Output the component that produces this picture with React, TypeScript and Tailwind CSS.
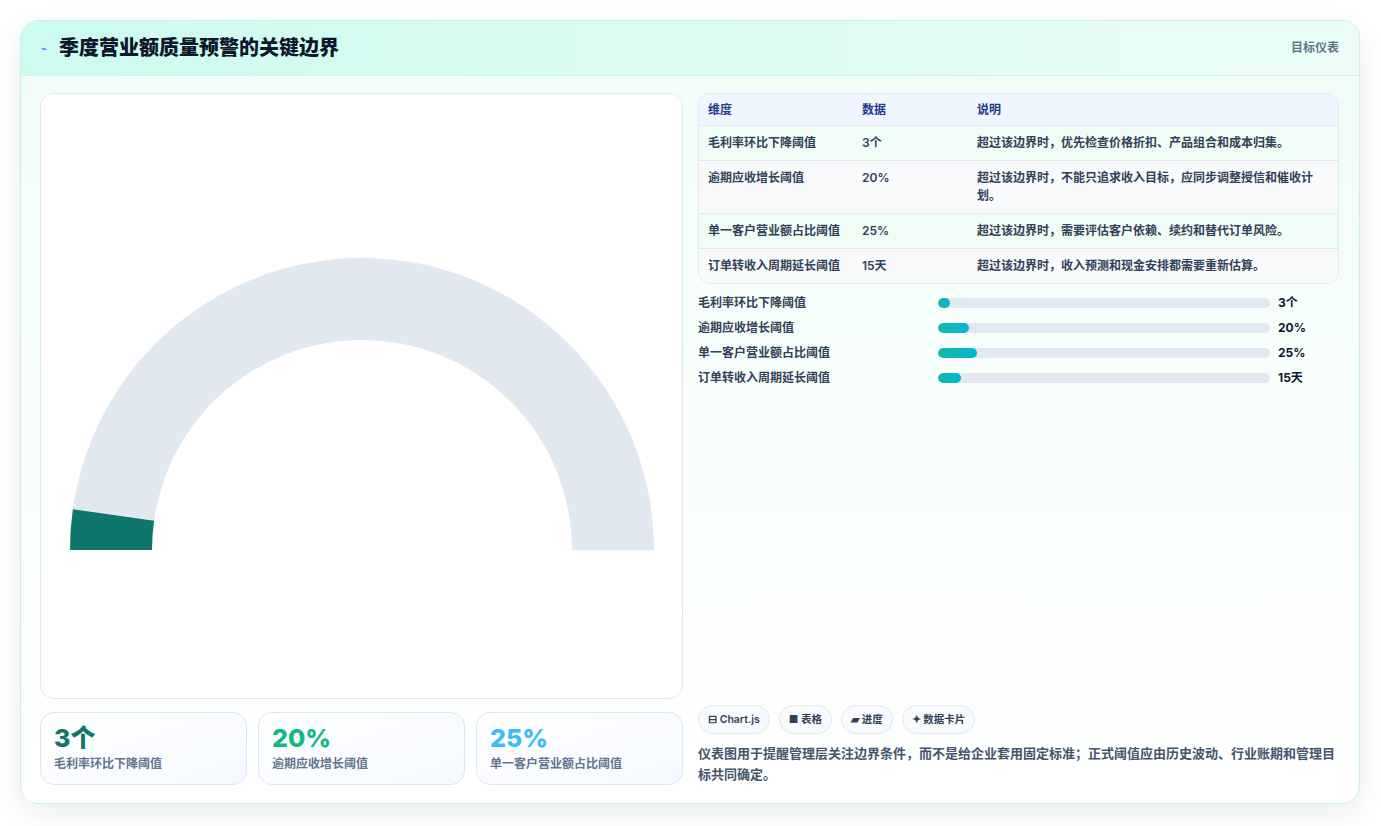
import React from "react";

const rows = [
  ["毛利率环比下降阈值", "3个", "超过该边界时，优先检查价格折扣、产品组合和成本归集。"],
  ["逾期应收增长阈值", "20%", "超过该边界时，不能只追求收入目标，应同步调整授信和催收计划。"],
  ["单一客户营业额占比阈值", "25%", "超过该边界时，需要评估客户依赖、续约和替代订单风险。"],
  ["订单转收入周期延长阈值", "15天", "超过该边界时，收入预测和现金安排都需要重新估算。"],
];
const bars = [12, 31, 39, 23];

function Gauge() {
  const cx = 321, cy = 456, R = 292, r = 210;
  const a = (180 - 8) * Math.PI / 180;
  const p = (rad: number, ang: number) => `${cx + rad * Math.cos(ang)} ${cy - rad * Math.sin(ang)}`;
  return (
    <svg width="643" height="606" viewBox="0 0 643 606" className="block">
      <path d={`M ${p(R, Math.PI)} A ${R} ${R} 0 0 1 ${p(R, 0)} L ${p(r, 0)} A ${r} ${r} 0 0 0 ${p(r, Math.PI)} Z`} fill="#e2e8f0" />
      <path d={`M ${p(R, Math.PI)} A ${R} ${R} 0 0 1 ${p(R, a)} L ${p(r, a)} A ${r} ${r} 0 0 0 ${p(r, Math.PI)} Z`} fill="#0f766e" />
    </svg>
  );
}

export default function App() {
  return (
    <div className="min-h-[826px] bg-white p-5 text-slate-800" style={{ fontFamily: "Inter, 'Noto Sans CJK SC', sans-serif" }}>
      <div className="w-[1340px] rounded-[18px] border border-[#c8f0e4] shadow-[0_10px_30px_rgba(15,23,42,0.08)] overflow-hidden bg-gradient-to-b from-[#f0fdf8] to-white">
        <div className="h-[55px] flex items-center justify-between px-5 bg-gradient-to-r from-[#ccfbef] to-[#ecfdf7] border-b border-[#d6f3ea]">
          <div className="flex items-center gap-3">
            <span className="text-[10px] text-blue-500">⌁</span>
            <span className="text-[20px] font-extrabold text-slate-900">季度营业额质量预警的关键边界</span>
          </div>
          <span className="text-[12px] font-semibold text-slate-500">目标仪表</span>
        </div>
        <div className="flex gap-[15px] pl-[19px] pr-5 pt-[17px] pb-[18px]">
          <div className="w-[643px] flex flex-col gap-[13px]">
            <div className="h-[606px] rounded-[14px] border border-slate-200 bg-white overflow-hidden"><Gauge /></div>
            <div className="flex gap-[11px]">
              {[["3个", "text-[#0f766e]", "毛利率环比下降阈值"], ["20%", "text-[#10b981]", "逾期应收增长阈值"], ["25%", "text-[#38bdf8]", "单一客户营业额占比阈值"]].map(([v, c, l]) => (
                <div key={v} className="w-[207px] h-[73px] rounded-[14px] border border-[#dbe7f5] bg-gradient-to-br from-white to-[#f5f9ff] px-[13px] pt-[10px]">
                  <div className={`text-[25px] leading-[30px] font-extrabold ${c}`}>{v}</div>
                  <div className="text-[12px] font-semibold text-slate-500 mt-[2px]">{l}</div>
                </div>
              ))}
            </div>
          </div>
          <div className="w-[643px] flex flex-col">
            <div className="rounded-[12px] border border-slate-200 overflow-hidden text-[12px] font-semibold">
              <div className="flex h-[32px] items-center bg-[#eff6ff] text-[#1e3a8a] border-b border-slate-200 px-[9px]">
                <div className="w-[154px]">维度</div><div className="w-[115px]">数据</div><div>说明</div>
              </div>
              {rows.map((r, i) => (
                <div key={i} className={`flex px-[9px] py-[8px] leading-[18px] text-slate-700 ${i % 2 === 0 ? "bg-[#f0fdf6]" : "bg-[#f8fafc]"} ${i < 3 ? "border-b border-slate-200" : ""}`}>
                  <div className="w-[154px] shrink-0">{r[0]}</div>
                  <div className="w-[115px] shrink-0">{r[1]}</div>
                  <div className="pr-[10px]">{r[2]}</div>
                </div>
              ))}
            </div>
            <div className="mt-[10px] flex flex-col gap-[7px] text-[12px] font-semibold">
              {rows.map((r, i) => (
                <div key={i} className="flex items-center h-[18px]">
                  <div className="w-[240px] text-slate-700">{r[0]}</div>
                  <div className="w-[332px] h-[10px] rounded-full bg-[#e2e8f0] overflow-hidden">
                    <div className="h-full rounded-full bg-gradient-to-r from-[#14b8a6] to-[#06b6d4]" style={{ width: bars[i] }} />
                  </div>
                  <div className="ml-2 font-bold text-slate-900">{r[1]}</div>
                </div>
              ))}
            </div>
            <div className="mt-auto flex gap-[9px] text-[10.5px] font-semibold text-slate-700">
              {["⊟ Chart.js", "■ 表格", "▰ 进度", "✦ 数据卡片"].map(t => (
                <span key={t} className="h-[29px] px-[9px] flex items-center rounded-full border border-slate-200 bg-[#f8fafc]">{t}</span>
              ))}
            </div>
            <p className="mt-[9px] text-[13px] leading-[21px] font-semibold text-slate-600">仪表图用于提醒管理层关注边界条件，而不是给企业套用固定标准；正式阈值应由历史波动、行业账期和管理目标共同确定。</p>
          </div>
        </div>
      </div>
    </div>
  );
}
